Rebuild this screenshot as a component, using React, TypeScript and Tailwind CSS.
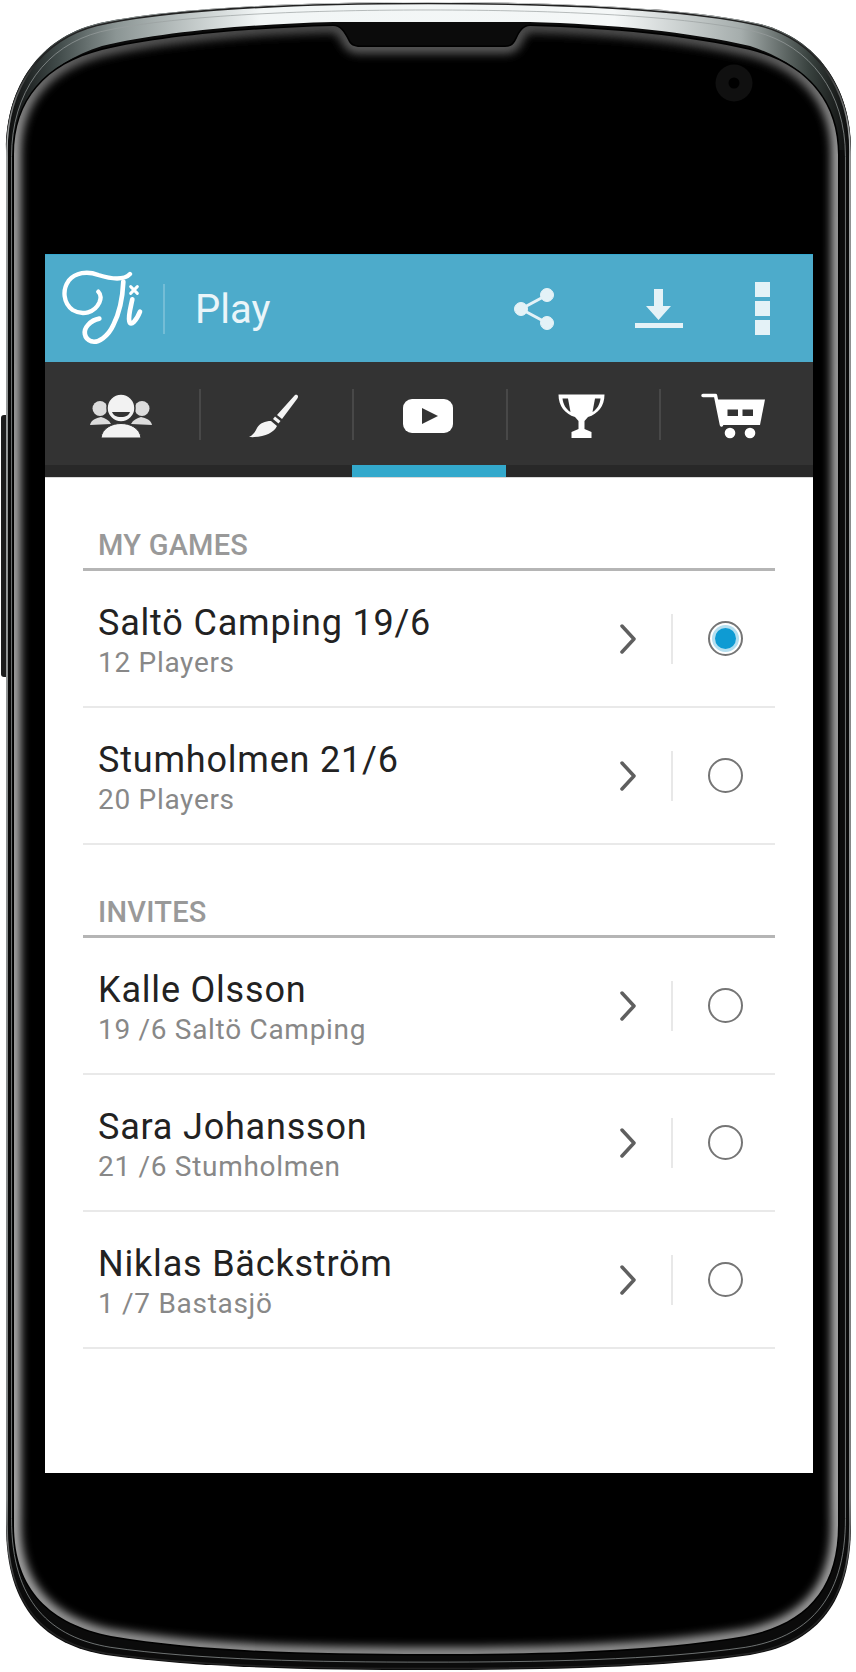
import React from 'react';

const OUTER =
  'M428 2 C560 2 690 8 760 24 C815 38 851 85 851 150 L851 1525 C851 1610 810 1645 750 1655 C660 1668 540 1670 428 1670 C316 1670 196 1668 106 1655 C46 1645 6 1610 6 1525 L6 150 C6 85 41 38 96 24 C166 8 296 2 428 2 Z';
const INNER =
  'M333 26 C340 26 344 32 348 40 C350 45 354 47 360 47 L505 47 C512 47 514 44 517 38 C520 31 524 26 530 26 C610 28 690 36 750 50 C805 64 838 100 838 155 L838 1525 C838 1590 805 1624 745 1636 C650 1652 540 1654 428 1654 C316 1654 206 1652 111 1636 C51 1624 14 1590 14 1525 L14 155 C14 100 46 64 102 50 C160 36 250 28 333 26 Z';
const RIM_TOP =
  'M428 2 C560 2 690 8 760 24 C815 38 851 85 851 150 L838 150 C838 100 805 64 750 46 C690 32 610 24 530 22 L333 22 C250 24 160 32 102 46 C46 64 14 100 14 150 L6 150 C6 85 41 38 96 24 C166 8 296 2 428 2 Z';

const PhoneBody: React.FC = () => (
  <svg className="absolute inset-0" width="856" height="1672" viewBox="0 0 856 1672">
    <defs>
      <linearGradient id="rim" gradientUnits="userSpaceOnUse" x1="6" y1="0" x2="851" y2="0">
        <stop offset="0" stopColor="#0b0b0b" />
        <stop offset="0.06" stopColor="#3f4948" />
        <stop offset="0.13" stopColor="#8b9594" />
        <stop offset="0.3" stopColor="#f2f6f6" />
        <stop offset="0.72" stopColor="#f4f7f7" />
        <stop offset="0.87" stopColor="#a5adac" />
        <stop offset="0.95" stopColor="#39423f" />
        <stop offset="1" stopColor="#0b0b0b" />
      </linearGradient>
      <linearGradient id="glow" gradientUnits="userSpaceOnUse" x1="0" y1="20" x2="0" y2="1660">
        <stop offset="0" stopColor="#4a4a4a" />
        <stop offset="0.08" stopColor="#aaa" />
        <stop offset="0.9" stopColor="#bbb" />
        <stop offset="1" stopColor="#999" />
      </linearGradient>
      <linearGradient id="edge" gradientUnits="userSpaceOnUse" x1="0" y1="60" x2="0" y2="1660">
        <stop offset="0" stopColor="#222" />
        <stop offset="0.06" stopColor="#c8cccc" />
        <stop offset="0.9" stopColor="#a8acac" />
        <stop offset="0.96" stopColor="#222" />
      </linearGradient>
      <filter id="soft" x="-5%" y="-5%" width="110%" height="110%">
        <feGaussianBlur stdDeviation="5" />
      </filter>
      <clipPath id="innerClip">
        <path d={INNER} />
      </clipPath>
    </defs>
    <rect x="1" y="415" width="8" height="262" rx="3" fill="#1c1c1c" />
    <path d={OUTER} fill="#0b0b0b" />
    <path d={RIM_TOP} fill="url(#rim)" />
    <path d={INNER} fill="#000" stroke="#000" strokeWidth="3" />
    <g clipPath="url(#innerClip)">
      <path d={INNER} fill="none" stroke="url(#glow)" strokeWidth="13" filter="url(#soft)" />
    </g>
    <path d={OUTER} transform="translate(1 1.500) scale(0.9976 0.9982)" fill="none" stroke="url(#edge)" strokeWidth="1.500" />
    <path d={OUTER} transform="translate(5.6 8) scale(0.9869 0.9905)" fill="none" stroke="#9aa0a0" strokeWidth="1" opacity="0.7" />
    <circle cx="734" cy="83" r="18.5" fill="#101010" />
    <circle cx="734" cy="83" r="5.5" fill="#000" />
  </svg>
);

const Logo: React.FC = () => (
  <svg width="82" height="76" viewBox="0 0 246 228" fill="none" stroke="#fff" strokeLinecap="round" strokeLinejoin="round">
    <path
      d="M204 12 C185 32 150 28 109 15 C75 2 40 8 20 32 C0 60 4 100 32 120 C62 138 98 128 112 98 C118 84 116 72 109 65"
      strokeWidth="13"
    />
    <path
      d="M184 35 C182 80 172 130 154 165 C138 200 108 220 88 214 C66 206 62 182 78 165 C88 154 100 148 112 146"
      strokeWidth="14"
    />
    <path d="M211 88 C206 112 198 138 202 154 C206 172 224 150 234 125" strokeWidth="14" />
    <path d="M206 50 L226 70 M226 50 L206 70" strokeWidth="9" />
  </svg>
);

const ShareIcon: React.FC = () => (
  <svg width="42" height="42" viewBox="0 0 42 42" fill="#e4f2f7" stroke="#e4f2f7">
    <path d="M34 7 L8 21 L34 35" fill="none" strokeWidth="3" />
    <circle cx="34" cy="7" r="6.5" />
    <circle cx="8" cy="21" r="6.5" />
    <circle cx="34" cy="35" r="6.5" />
  </svg>
);

const DownloadIcon: React.FC = () => (
  <svg width="48" height="42" viewBox="0 0 48 42" fill="#e4f2f7">
    <path d="M19 1 H28 V18 H36 L23.500 32 L11 18 H19 Z" />
    <rect x="0" y="35" width="48" height="5" />
  </svg>
);

const MoreIcon: React.FC = () => (
  <div className="flex flex-col gap-1">
    <div className="w-[15px] h-[15px] bg-[#e4f2f7]" />
    <div className="w-[15px] h-[15px] bg-[#e4f2f7]" />
    <div className="w-[15px] h-[15px] bg-[#e4f2f7]" />
  </div>
);

const PeopleIcon: React.FC = () => (
  <svg width="62" height="44" viewBox="0 0 62 44">
    <circle cx="10" cy="14.500" r="7.500" fill="#dcdcdc" />
    <circle cx="52" cy="14.500" r="7.500" fill="#dcdcdc" />
    <path d="M0 31 C1 26 6 24 11 23 C15 24 19 26 21 30 Z" fill="#dcdcdc" />
    <path d="M62 31 C61 26 56 24 51 23 C47 24 43 26 41 30 Z" fill="#dcdcdc" />
    <circle cx="31" cy="14" r="14" fill="#f2f2f2" stroke="#333" strokeWidth="1.500" />
    <path d="M22 18 H40 C39 21 36 23 31 23 C26 23 23 21 22 18 Z" fill="#333" />
    <path d="M11 44 C12 34 22 29.500 31 29.500 C40 29.500 50 34 51 44 Z" fill="#f2f2f2" stroke="#333" strokeWidth="1" />
  </svg>
);

const BrushIcon: React.FC = () => (
  <svg width="50" height="44" viewBox="0 0 50 44" fill="#f4f4f4">
    <path d="M46 1 C49 0 50 3 48 5 L33 25 L28 21 Z" />
    <path d="M26 22.500 L31.500 27 L29.500 29.500 L24 25 Z" />
    <path d="M22 27 L28 32 C25 39 14 44 0 43 C4 41 6 38 8 34 C11 29 16 27 22 27 Z" />
  </svg>
);

const PlayIcon: React.FC = () => (
  <svg width="50" height="34" viewBox="0 0 50 34">
    <rect x="0" y="0" width="50" height="34" rx="9" fill="#fff" />
    <path d="M19 9 L35 17 L19 25 Z" fill="#333" />
  </svg>
);

const TrophyIcon: React.FC = () => (
  <svg width="47" height="44" viewBox="0 0 47 44">
    <path
      d="M0.500 0.500 H46.500 C46.500 12 40 20 30 23 L26.500 27 V35 L33.500 38 V44 H13.500 V38 L20.500 35 V27 L17 23 C7 20 0.500 12 0.500 0.500 Z"
      fill="#fff"
    />
    <path d="M4.500 4.500 H10 L12.500 18 C8 15.500 5 10 4.500 4.500 Z" fill="#333" />
    <path d="M42.500 4.500 H37 L34.500 18 C39 15.500 42 10 42.500 4.500 Z" fill="#333" />
  </svg>
);

const CartIcon: React.FC = () => (
  <svg className="mr-[5px]" width="64" height="46" viewBox="0 0 64 46">
    <path d="M2 2.500 H14.500 L20.500 32" fill="none" stroke="#fff" strokeWidth="3.500" strokeLinecap="round" strokeLinejoin="round" />
    <path d="M14.500 6.500 H64 L59 32 H20.500 Z" fill="#fff" />
    <rect x="26.500" y="16.500" width="10.500" height="6.500" fill="#333" />
    <rect x="41.500" y="16.500" width="10.500" height="6.500" fill="#333" />
    <circle cx="29" cy="40" r="5.300" fill="#fff" />
    <circle cx="49" cy="40" r="5.300" fill="#fff" />
  </svg>
);

const tabs = [
  { icon: <PeopleIcon />, active: false },
  { icon: <BrushIcon />, active: false },
  { icon: <PlayIcon />, active: true },
  { icon: <TrophyIcon />, active: false },
  { icon: <CartIcon />, active: false },
];

const Tab: React.FC<{ icon: React.ReactNode; active: boolean; last: boolean }> = ({ icon, active, last }) => (
  <div className="flex flex-col">
    <div className="h-[103px] flex items-center">
      <div className="flex-1 flex items-center justify-center pt-[5px] pr-[2px]">{icon}</div>
      {!last && <div className="w-[2px] h-[51px] mt-[2px] -mr-[2px] bg-[#484848]" />}
    </div>
    <div className={active ? 'h-[12px] bg-[#33a9cc]' : 'h-[12px] bg-[#282828]'} />
  </div>
);

const SectionHeading: React.FC<{ title: string }> = ({ title }) => (
  <div className="h-[93px] flex items-end pl-[15px] pb-[6px] border-b-[3px] border-[#b5b5b5]">
    <span className="text-[29px] leading-[34px] tracking-[0.25px] font-medium text-[#999999]">{title}</span>
  </div>
);

const Radio: React.FC<{ selected?: boolean }> = ({ selected }) => (
  <div className="w-[35px] h-[35px] rounded-full border-2 border-[#757575] flex items-center justify-center bg-white">
    {selected && <div className="w-[21px] h-[21px] rounded-full bg-[#0e9bd3] ring-[3px] ring-[#b4dff0]" />}
  </div>
);

const Row: React.FC<{ title: string; sub: string; selected?: boolean }> = ({ title, sub, selected }) => (
  <div className="h-[137px] flex items-center pl-[15px] pr-[32px] border-b-2 border-[#e9e9e9]">
    <div className="flex-1 flex flex-col pt-[4px]">
      <span className="text-[36px] leading-[42px] tracking-[0.8px] text-[#222222]">{title}</span>
      <span className="mt-[2px] text-[28px] leading-[34px] tracking-[0.7px] text-[#888888]">{sub}</span>
    </div>
    <svg width="16" height="30" viewBox="0 0 16 30" fill="none" stroke="#5f5f5f" strokeWidth="3.500" strokeLinecap="round" strokeLinejoin="round">
      <path d="M2 2 L14 15 L2 28" />
    </svg>
    <div className="w-[2px] h-[50px] bg-[#e8e8e8] ml-[35px] mr-[35px]" />
    <Radio selected={selected} />
  </div>
);

const App: React.FC = () => {
  return (
    <div className="relative w-[856px] h-[1672px] bg-white pt-[254px] pl-[45px] font-['Roboto',sans-serif] overflow-hidden">
      <PhoneBody />
      <div className="relative w-[768px] h-[1219px] bg-white flex flex-col">
        <header className="h-[108px] bg-[#4dabcb] border-t border-[#35a8cf] flex items-center">
          <div className="ml-[17px] mt-[-1px]">
            <Logo />
          </div>
          <div className="w-[2px] h-[50px] ml-[19px] bg-[#74bdd6]" />
          <span className="ml-[30px] mt-[3px] text-[40px] leading-[46px] text-[#eaf5f9]">Play</span>
          <div className="ml-auto pr-[43px] flex items-center">
            <ShareIcon />
            <div className="ml-[80px]">
              <DownloadIcon />
            </div>
            <div className="ml-[72px]">
              <MoreIcon />
            </div>
          </div>
        </header>
        <nav className="grid grid-cols-5 bg-[#333333] border-b border-[#d8d8d8]">
          {tabs.map((tab, index) => (
            <Tab key={index} icon={tab.icon} active={tab.active} last={index === tabs.length - 1} />
          ))}
        </nav>
        <main className="px-[38px]">
          <SectionHeading title="MY GAMES" />
          <Row title="Saltö Camping 19/6" sub="12 Players" selected />
          <Row title="Stumholmen 21/6" sub="20 Players" />
          <SectionHeading title="INVITES" />
          <Row title="Kalle Olsson" sub="19 /6 Saltö Camping" />
          <Row title="Sara Johansson" sub="21 /6 Stumholmen" />
          <Row title="Niklas Bäckström" sub="1 /7 Bastasjö" />
        </main>
      </div>
    </div>
  );
};

export default App;
